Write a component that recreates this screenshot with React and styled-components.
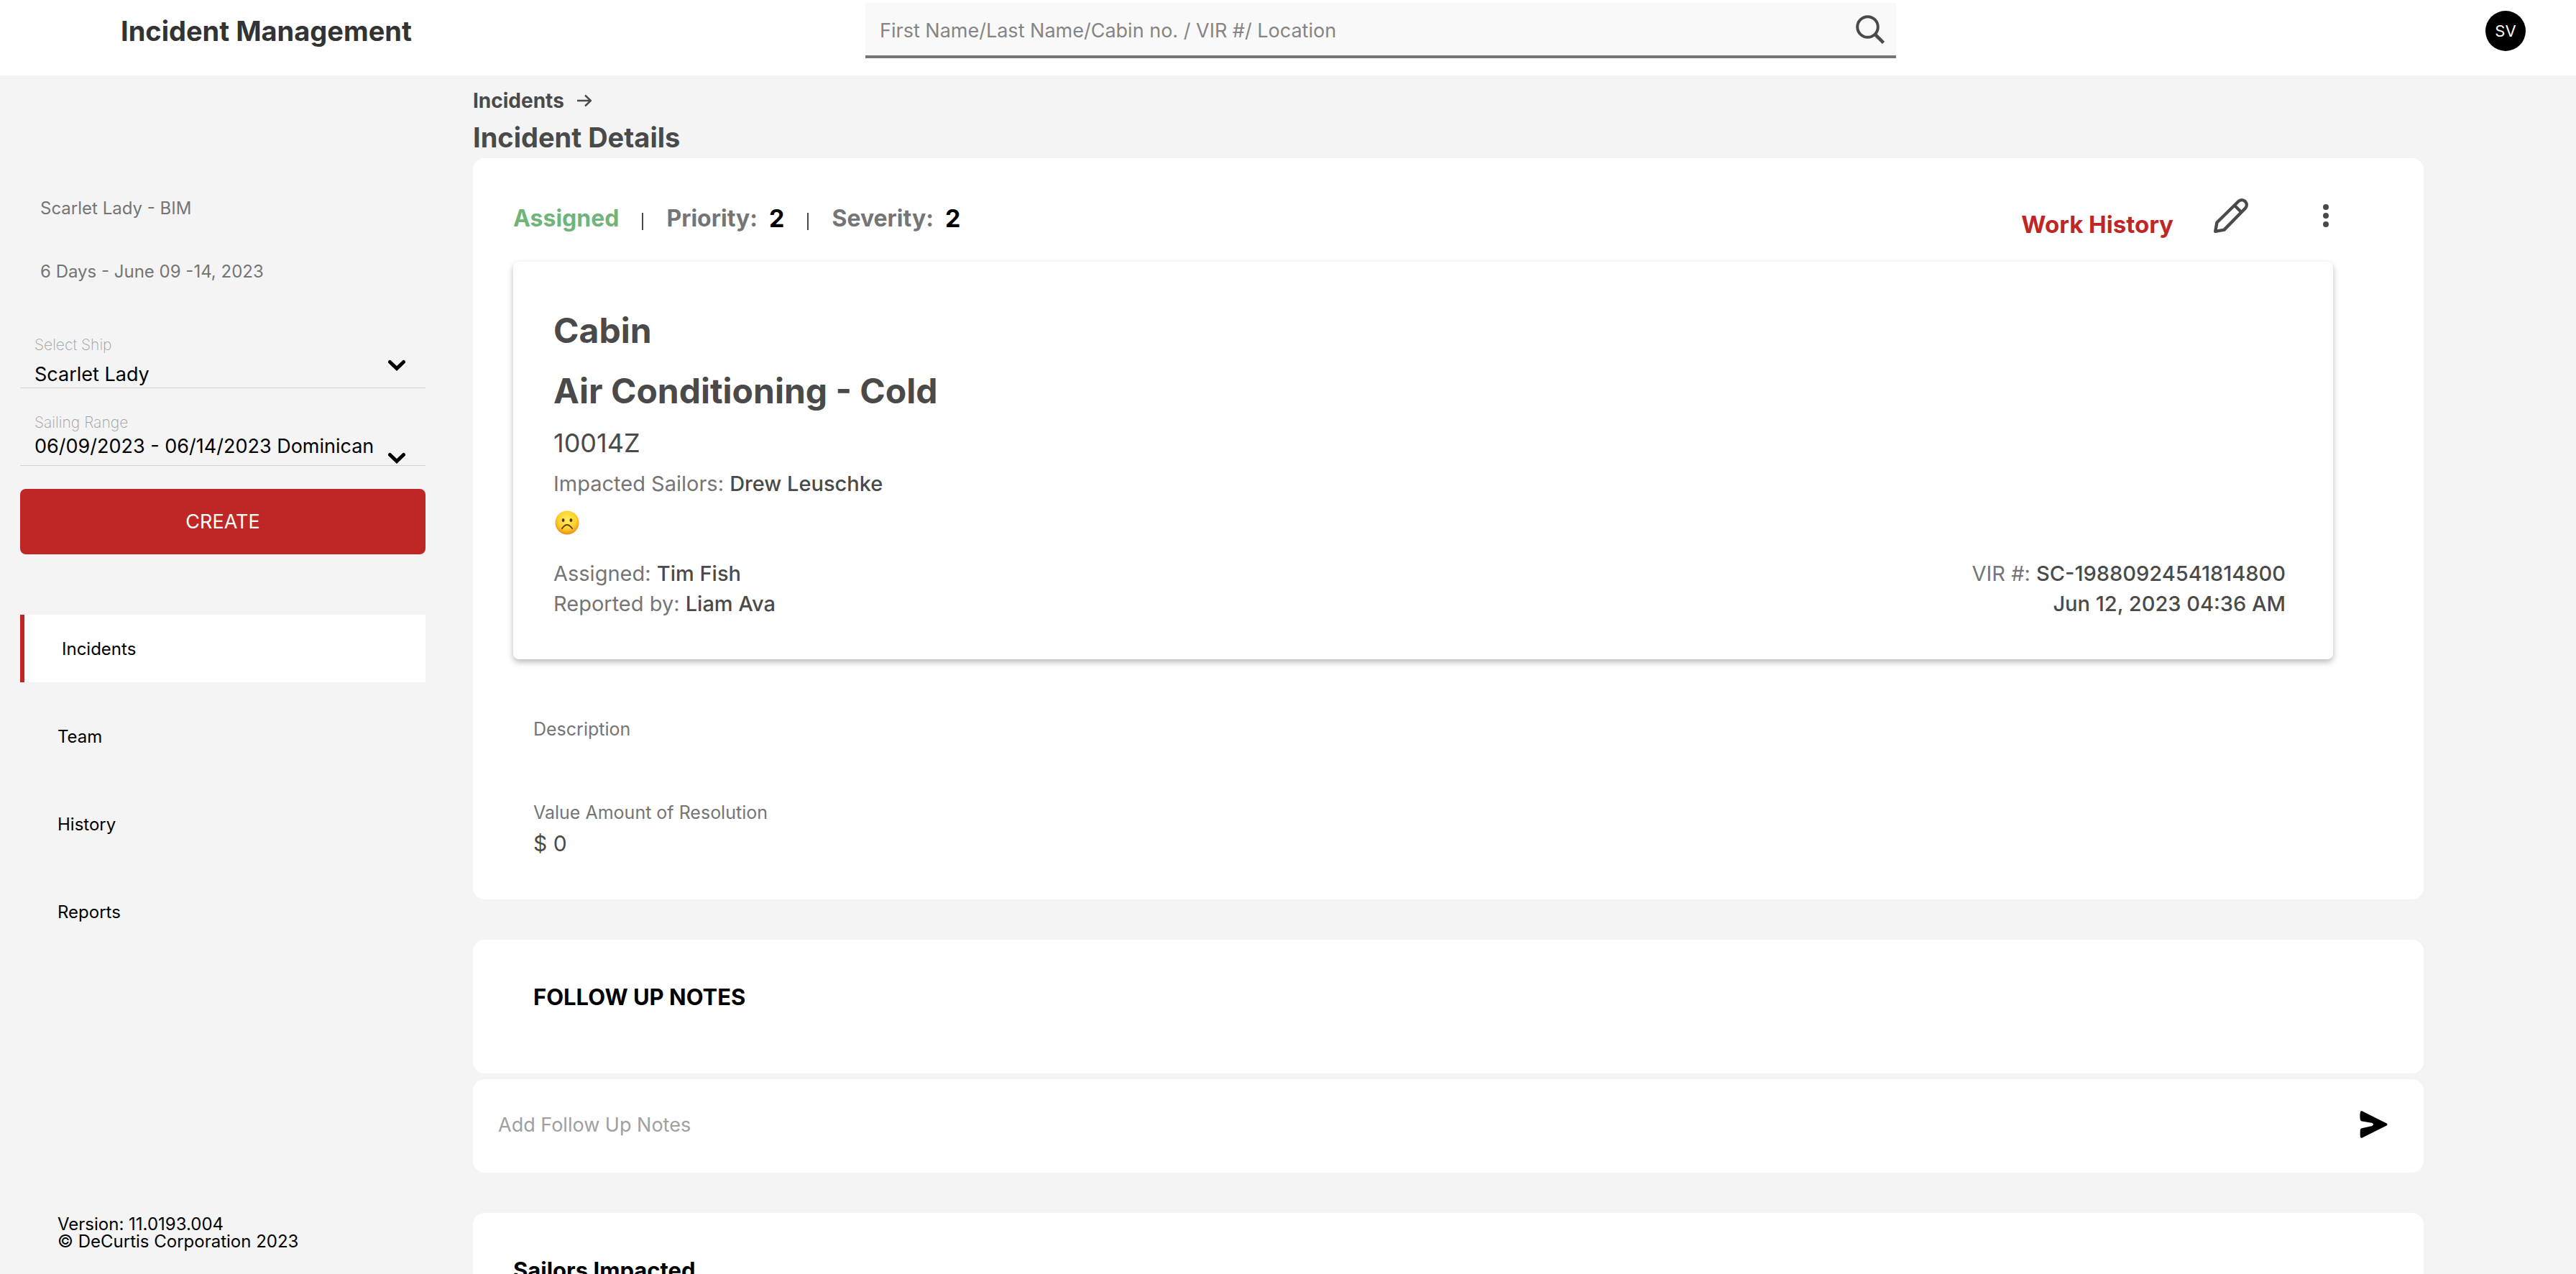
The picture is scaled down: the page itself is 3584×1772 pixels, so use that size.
import React from "react";
import styled, { createGlobalStyle } from "styled-components";

const GlobalStyle = createGlobalStyle`
  *, *::before, *::after { box-sizing: border-box; }
  body {
    margin: 0;
    background: #f4f4f4;
    color: #000;
    font-family: Inter, "Liberation Sans", sans-serif;
    font-size: 24px;
  }
  h1, h2, h3, p { margin: 0; }
  button, input, select { font: inherit; color: inherit; border: 0; padding: 0; background: none; }
  button { cursor: pointer; }
  a { color: inherit; text-decoration: none; }
`;

const Page = styled.div`
  display: flex;
  flex-direction: column;
  height: 100vh;
  overflow: hidden;
`;

const Header = styled.header`
  display: flex;
  align-items: center;
  flex: none;
  padding: 4px 70px 24px 0;
  background: #fff;
`;

const Brand = styled.div`
  width: 1204px;
  padding-left: 168px;
  color: #333;
  font-size: 38px;
  font-weight: 700;
  line-height: 48px;
`;

const Search = styled.form`
  display: flex;
  align-items: center;
  width: 40vw;
  padding: 0 12px 0 20px;
  background: #f9f9f9;
  border-bottom: 4px solid #757575;
`;

const SearchInput = styled.input`
  flex: 1;
  height: 73px;
  padding-top: 4px;
  font-size: 27px;
  outline: 0;
  &::placeholder { color: #858585; opacity: 1; }
`;

const IconButton = styled.button`
  display: flex;
  align-items: center;
  justify-content: center;
  width: ${(p) => p.$width || 48}px;
  height: 48px;
  color: ${(p) => p.$color || "#4a4a4a"};
`;

const Avatar = styled.button`
  width: 56px;
  height: 56px;
  margin-left: auto;
  border-radius: 50%;
  background: #000;
  color: #fff;
  font-size: 22px;
`;

const Body = styled.div`
  display: flex;
  flex: 1;
  min-height: 0;
`;

const Sidebar = styled.aside`
  display: flex;
  flex-direction: column;
  width: 620px;
  padding: 169px 28px 33px;
`;

const Voyage = styled.div`
  display: grid;
  gap: 56px;
  padding-left: 28px;
  color: #757575;
  line-height: 32px;
`;

const Fields = styled.div`
  display: grid;
  gap: 36px;
  margin-top: 74px;
`;

const Field = styled.div`
  padding: 0 28px 0 20px;
  border-bottom: 1px solid #d2d2d2;
`;

const FieldLabel = styled.label`
  display: block;
  color: #a0a0a0;
  font-size: 21px;
  font-weight: 200;
  line-height: 24px;
`;

const FieldControl = styled.div`
  display: flex;
  align-items: ${(p) => (p.$low ? "flex-end" : "flex-start")};
  justify-content: space-between;
  height: 47px;
`;

const Select = styled.select`
  appearance: none;
  width: 490px;
  height: 47px;
  padding-top: ${(p) => (p.$low ? 0 : 10)}px;
  padding-bottom: ${(p) => (p.$low ? 6 : 0)}px;
  font-size: 27px;
  outline: 0;
`;

const Chevron = styled.svg`
  flex: none;
  width: 24px;
  height: 20px;
  margin-top: 6px;
`;

const CreateButton = styled.button`
  height: 91px;
  margin-top: 32px;
  border-radius: 8px;
  background: #bf2626;
  color: #fff;
  font-size: 27px;
`;

const Nav = styled.nav`
  display: grid;
  gap: 28px;
  margin-top: 84px;
`;

const NavLink = styled.a`
  display: flex;
  align-items: center;
  height: 94px;
  padding-left: 52px;
  border-left: ${(p) => (p.$active ? "6px solid #bf2626" : "0")};
  background: ${(p) => (p.$active ? "#fff" : "transparent")};
`;

const Footer = styled.footer`
  margin-top: auto;
  padding-left: 52px;
  line-height: 24px;
`;

const Main = styled.main`
  flex: 1;
  min-width: 0;
  padding: 17px 212px 0 38px;
  overflow: hidden;
`;

const Breadcrumb = styled.nav`
  display: flex;
  align-items: center;
  gap: 18px;
  color: #4a4a4a;
  font-size: 28px;
  font-weight: 700;
  line-height: 36px;
`;

const PageTitle = styled.h1`
  margin-top: 4px;
  color: #4a4a4a;
  font-size: 38px;
  font-weight: 700;
  line-height: 58px;
`;

const Card = styled.section`
  margin-bottom: ${(p) => p.$gap || 56}px;
  padding: ${(p) => p.$pad || "56px"};
  border-radius: 16px;
  background: #fff;
`;

const Toolbar = styled.div`
  display: flex;
  align-items: flex-start;
  justify-content: space-between;
  height: 88px;
`;

const Status = styled.div`
  display: flex;
  align-items: center;
  color: #757575;
  font-size: 32px;
  font-weight: 700;
  line-height: 56px;
`;

const State = styled.span`
  color: #70b479;
`;

const Bar = styled.span`
  width: 2px;
  height: 24px;
  margin: 8px 32px 0;
  background: #4a4a4a;
`;

const Level = styled.strong`
  margin-left: 16px;
  color: #000;
  font-size: 34px;
  font-weight: 700;
`;

const Actions = styled.div`
  display: flex;
  align-items: flex-start;
`;

const HistoryLink = styled.a`
  margin-right: 56px;
  color: #bf2626;
  font-size: 33px;
  font-weight: 700;
  line-height: 72px;
`;

const MoreSlot = styled.div`
  margin-left: 98px;
`;

const Summary = styled.article`
  padding: 54px 66px 56px 56px;
  border-radius: 8px;
  background: #fff;
  box-shadow: 0 4px 8px rgba(0, 0, 0, 0.28);
`;

const Heading = styled.h2`
  color: #4a4a4a;
  font-size: 48px;
  font-weight: 700;
  line-height: 84px;
`;

const Cabin = styled.p`
  color: #4a4a4a;
  font-size: 36px;
  line-height: 60px;
`;

const Fact = styled.p`
  color: #757575;
  font-size: 29px;
  line-height: ${(p) => p.$line || 42}px;
  strong { color: #4a4a4a; font-weight: 500; }
`;

const Mood = styled.div`
  display: flex;
  align-items: center;
  height: 54px;
  padding-left: 2px;
`;

const Facts = styled.div`
  display: flex;
  justify-content: space-between;
  margin-top: 23px;
`;

const FactColumn = styled.div`
  text-align: ${(p) => p.$align || "left"};
`;

const Details = styled.dl`
  display: grid;
  gap: 30px;
  margin: 77px 0 0;
  padding-left: 28px;
`;

const DetailLabel = styled.dt`
  color: #757575;
  font-size: 25px;
  line-height: 40px;
`;

const DetailValue = styled.dd`
  height: 46px;
  margin: 0;
  color: #4a4a4a;
  font-size: 30px;
  line-height: 46px;
`;

const SectionTitle = styled.h3`
  font-size: 31px;
  font-weight: 700;
  line-height: 48px;
`;

const NoteForm = styled.form`
  display: flex;
  align-items: center;
  height: 126px;
`;

const NoteInput = styled.input`
  flex: 1;
  height: 72px;
  font-size: 27px;
  outline: 0;
  &::placeholder { color: #a0a0a0; opacity: 1; }
`;

const SearchIcon = () => (
  <svg width="40" height="40" viewBox="0 0 40 40" fill="none" stroke="currentColor" strokeWidth="4">
    <circle cx="16.5" cy="16.5" r="14.3" />
    <path d="M26.5 26.5 38.5 38.5" strokeWidth="4.6" />
  </svg>
);

const ArrowIcon = () => (
  <svg width="20" height="18" viewBox="0 0 20 18" fill="none" stroke="currentColor" strokeWidth="2.4">
    <path d="M0 9H19M11 1.5 19 9 11 16.5" />
  </svg>
);

const ChevronIcon = () => (
  <Chevron viewBox="0 0 24 20" fill="none" stroke="#000" strokeWidth="5" strokeLinecap="round" strokeLinejoin="miter" aria-hidden="true">
    <path d="M2.5 5.5 12 14.5 21.5 5.5" />
  </Chevron>
);

const PencilIcon = () => (
  <svg width="48" height="48" viewBox="0 0 48 48" fill="none" stroke="currentColor" strokeWidth="4.4" strokeLinejoin="round">
    <path d="M2.2 45.8 4.4 33.5 34.2 4.2C37 1.6 41 1.6 43.8 4.2 46.4 7 46.4 11 43.8 13.8L14.5 43.6Z" />
    <path d="M28.7 9.5 38.5 19.3" />
  </svg>
);

const MoreIcon = () => (
  <svg width="8" height="32" viewBox="0 0 8 32" fill="currentColor">
    <circle cx="4" cy="4" r="4" />
    <circle cx="4" cy="16" r="4" />
    <circle cx="4" cy="28" r="4" />
  </svg>
);

const SadFace = () => (
  <svg width="34" height="34" viewBox="0 0 34 34" role="img" aria-label="Unhappy">
    <defs>
      <radialGradient id="face" cx="0.5" cy="0.38" r="0.64">
        <stop offset="0" stopColor="#fff05a" />
        <stop offset="0.6" stopColor="#fcd02f" />
        <stop offset="1" stopColor="#e8860f" />
      </radialGradient>
    </defs>
    <circle cx="17" cy="17" r="16.5" fill="url(#face)" />
    <ellipse cx="11.6" cy="13.6" rx="1.9" ry="2.5" fill="#5b3207" />
    <ellipse cx="22.4" cy="13.6" rx="1.9" ry="2.5" fill="#5b3207" />
    <path d="M9.8 25.2Q17 14.8 24.2 25.2" fill="none" stroke="#6b3c08" strokeWidth="1.8" strokeLinecap="round" />
  </svg>
);

const SendIcon = () => (
  <svg width="39" height="38" viewBox="0 0 39 38" fill="currentColor">
    <path d="M3.2 0.3 37.6 17.6Q39.6 19 37.6 20.4L3.2 37.7Q1 38.2 0.9 36 0.4 31 0.9 26.5 1.2 24.5 3 24.2L16.6 21.2Q19.8 20.2 18.6 18 18 17.2 16.6 16.8L3 14.6Q1.2 14.2 0.7 11.5 0 6.5 0.9 2 1.2-0.2 3.2 0.3Z" />
  </svg>
);

const navItems = ["Incidents", "Team", "History", "Reports"];

export default function App() {
  return (
    <Page>
      <GlobalStyle />
      <Header>
        <Brand>Incident Management</Brand>
        <Search role="search" onSubmit={(e) => e.preventDefault()}>
          <SearchInput
            type="text"
            aria-label="Search incidents"
            placeholder="First Name/Last Name/Cabin no. / VIR #/ Location"
          />
          <IconButton type="submit" aria-label="Search"><SearchIcon /></IconButton>
        </Search>
        <Avatar type="button">SV</Avatar>
      </Header>
      <Body>
        <Sidebar>
          <Voyage>
            <p>Scarlet Lady - BIM</p>
            <p>6 Days - June 09 -14, 2023</p>
          </Voyage>
          <Fields>
            <Field>
              <FieldLabel htmlFor="ship">Select Ship</FieldLabel>
              <FieldControl>
                <Select id="ship"><option>Scarlet Lady</option></Select>
                <ChevronIcon />
              </FieldControl>
            </Field>
            <Field>
              <FieldLabel htmlFor="sailing">Sailing Range</FieldLabel>
              <FieldControl $low>
                <Select id="sailing" $low><option>06/09/2023 - 06/14/2023 Dominican</option></Select>
                <ChevronIcon />
              </FieldControl>
            </Field>
          </Fields>
          <CreateButton type="button">CREATE</CreateButton>
          <Nav aria-label="Sections">
            {navItems.map((item, i) => (
              <NavLink key={item} href={"#" + item.toLowerCase()} $active={i === 0}>{item}</NavLink>
            ))}
          </Nav>
          <Footer>
            <p>Version: 11.0193.004</p>
            <p>© DeCurtis Corporation 2023</p>
          </Footer>
        </Sidebar>
        <Main>
          <Breadcrumb aria-label="Breadcrumb">
            <a href="#incidents">Incidents</a>
            <ArrowIcon />
          </Breadcrumb>
          <PageTitle>Incident Details</PageTitle>
          <Card $pad="56px 126px 55px 56px">
            <Toolbar>
              <Status>
                <State>Assigned</State>
                <Bar />
                <span>Priority:</span>
                <Level>2</Level>
                <Bar />
                <span>Severity:</span>
                <Level>2</Level>
              </Status>
              <Actions>
                <HistoryLink href="#work-history">Work History</HistoryLink>
                <IconButton type="button" aria-label="Edit incident"><PencilIcon /></IconButton>
                <MoreSlot>
                  <IconButton type="button" aria-label="More actions" $width={20}><MoreIcon /></IconButton>
                </MoreSlot>
              </Actions>
            </Toolbar>
            <Summary>
              <Heading>Cabin</Heading>
              <Heading>Air Conditioning - Cold</Heading>
              <Cabin>10014Z</Cabin>
              <Fact $line={54}>Impacted Sailors: <strong>Drew Leuschke</strong></Fact>
              <Mood><SadFace /></Mood>
              <Facts>
                <FactColumn>
                  <Fact>Assigned: <strong>Tim Fish</strong></Fact>
                  <Fact>Reported by: <strong>Liam Ava</strong></Fact>
                </FactColumn>
                <FactColumn $align="right">
                  <Fact>VIR #: <strong>SC-19880924541814800</strong></Fact>
                  <Fact><strong>Jun 12, 2023 04:36 AM</strong></Fact>
                </FactColumn>
              </Facts>
            </Summary>
            <Details>
              <div>
                <DetailLabel>Description</DetailLabel>
                <DetailValue />
              </div>
              <div>
                <DetailLabel>Value Amount of Resolution</DetailLabel>
                <DetailValue>$ 0</DetailValue>
              </div>
            </Details>
          </Card>
          <Card $gap={8} $pad="56px 84px 82px">
            <SectionTitle>FOLLOW UP NOTES</SectionTitle>
          </Card>
          <Card $pad="0 46px 4px 35px">
            <NoteForm onSubmit={(e) => e.preventDefault()}>
              <NoteInput type="text" aria-label="Add Follow Up Notes" placeholder="Add Follow Up Notes" />
              <IconButton type="submit" aria-label="Send note" $color="#000"><SendIcon /></IconButton>
            </NoteForm>
          </Card>
          <Card>
            <SectionTitle>Sailors Impacted</SectionTitle>
          </Card>
        </Main>
      </Body>
    </Page>
  );
}
